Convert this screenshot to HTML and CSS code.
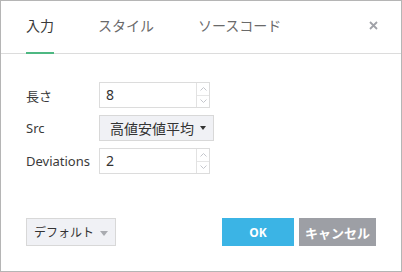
FILE: index.html
```html
<!DOCTYPE html>
<html lang="ja">
<head>
  <meta charset="UTF-8" />
  <title>設定</title>
  <link rel="stylesheet" href="styles.css">
</head>
<body>

  <div class="dialog">
    <div class="tabs">
      <div class="tab active">入力</div>
      <div class="tab">スタイル</div>
      <div class="tab">ソースコード</div>
      <button class="close" type="button">
        <svg width="9" height="9" viewBox="0 0 9 9"><path d="M1 1L8 8M8 1L1 8" stroke="#a0a2a8" stroke-width="1.8"/></svg>
      </button>
    </div>

    <div class="fields">
      <label>長さ</label>
      <div class="number">
        <span class="value">8</span>
        <div class="spin">
          <span><svg width="7" height="4" viewBox="0 0 7 4"><path d="M0.5 3.5L3.5 0.5L6.5 3.5" fill="none" stroke="#c4c6cc"/></svg></span>
          <span><svg width="7" height="4" viewBox="0 0 7 4"><path d="M0.5 0.5L3.5 3.5L6.5 0.5" fill="none" stroke="#c4c6cc"/></svg></span>
        </div>
      </div>

      <label>Src</label>
      <div class="select">
        <span>高値安値平均</span>
        <i class="caret"></i>
      </div>

      <label>Deviations</label>
      <div class="number">
        <span class="value">2</span>
        <div class="spin">
          <span><svg width="7" height="4" viewBox="0 0 7 4"><path d="M0.5 3.5L3.5 0.5L6.5 3.5" fill="none" stroke="#c4c6cc"/></svg></span>
          <span><svg width="7" height="4" viewBox="0 0 7 4"><path d="M0.5 0.5L3.5 3.5L6.5 0.5" fill="none" stroke="#c4c6cc"/></svg></span>
        </div>
      </div>
    </div>

    <div class="footer">
      <button class="btn-default" type="button">デフォルト<i class="caret light"></i></button>
      <button class="btn-ok" type="button">OK</button>
      <button class="btn-cancel" type="button">キャンセル</button>
    </div>
  </div>

</body>
</html>
```

FILE: styles.css
```css
* {
  box-sizing: border-box;
}

body {
  margin: 0;
  font-family: 'Noto Sans', 'Noto Sans CJK JP', sans-serif;
  color: #333;
  background: #fff;
}

.dialog {
  width: 402px;
  height: 272px;
  border: 1px solid #b5b5b5;
  display: flex;
  flex-direction: column;
}

.tabs {
  display: flex;
  align-items: flex-start;
  padding: 0 23px 0 25px;
  border-bottom: 1px solid #dcdcdc;
}

.tab {
  font-size: 14px;
  line-height: 20px;
  padding: 15px 0 16px;
  margin-right: 44px;
  margin-bottom: -1px;
  border-bottom: 2px solid transparent;
  color: #6a6a6a;
}

.tab.active {
  color: #3a3a3a;
  border-bottom-color: #4db882;
}

.close {
  margin-left: auto;
  margin-top: 20px;
  padding: 0;
  border: none;
  background: none;
  width: 9px;
  height: 9px;
  line-height: 0;
}

.fields {
  display: grid;
  grid-template-columns: 73px auto;
  grid-auto-rows: 26px;
  row-gap: 7px;
  align-items: center;
  justify-items: start;
  padding: 28px 25px 0;
}

.fields label {
  font-size: 13px;
  color: #3a3a3a;
}

.number {
  display: flex;
  width: 111px;
  height: 26px;
  border: 1px solid #dcdcdc;
}

.number .value {
  flex: 1;
  font-size: 14px;
  line-height: 24px;
  padding-left: 6px;
}

.spin {
  width: 13px;
  border-left: 1px solid #e2e2e2;
  display: flex;
  flex-direction: column;
}

.spin span {
  flex: 1;
  display: flex;
  align-items: center;
  justify-content: center;
}

.spin span + span {
  border-top: 1px solid #e6e6e6;
}

.select {
  display: flex;
  align-items: center;
  width: 115px;
  height: 26px;
  border: 1px solid #d8d8d8;
  background: #f0f1f5;
  font-size: 14px;
  padding: 0 7px 0 10px;
}

.select span {
  flex: 1;
}

.caret {
  display: inline-block;
  width: 0;
  height: 0;
  border-left: 3.5px solid transparent;
  border-right: 3.5px solid transparent;
  border-top: 4px solid #333;
  margin-left: 4px;
}

.caret.light {
  border-left-width: 4px;
  border-right-width: 4px;
  border-top: 5px solid #a9abb0;
  margin-left: 6px;
  vertical-align: middle;
}

.footer {
  display: flex;
  align-items: center;
  margin-top: 44px;
  padding: 0 25px;
}

.footer button {
  height: 28px;
  border: none;
  font-family: inherit;
  cursor: pointer;
}

.btn-default {
  width: 90px;
  border: 1px solid #d8d8d8 !important;
  background: #f0f1f5;
  color: #333;
  font-size: 12px;
  padding: 0;
  margin-right: auto;
}

.btn-ok {
  width: 72px;
  background: #3bb4e5;
  color: #fff;
  font-weight: bold;
  font-size: 12px;
  margin-right: 5px;
}

.btn-cancel {
  width: 77px;
  background: #9d9fa5;
  color: #fff;
  font-weight: bold;
  font-size: 13px;
}
```
